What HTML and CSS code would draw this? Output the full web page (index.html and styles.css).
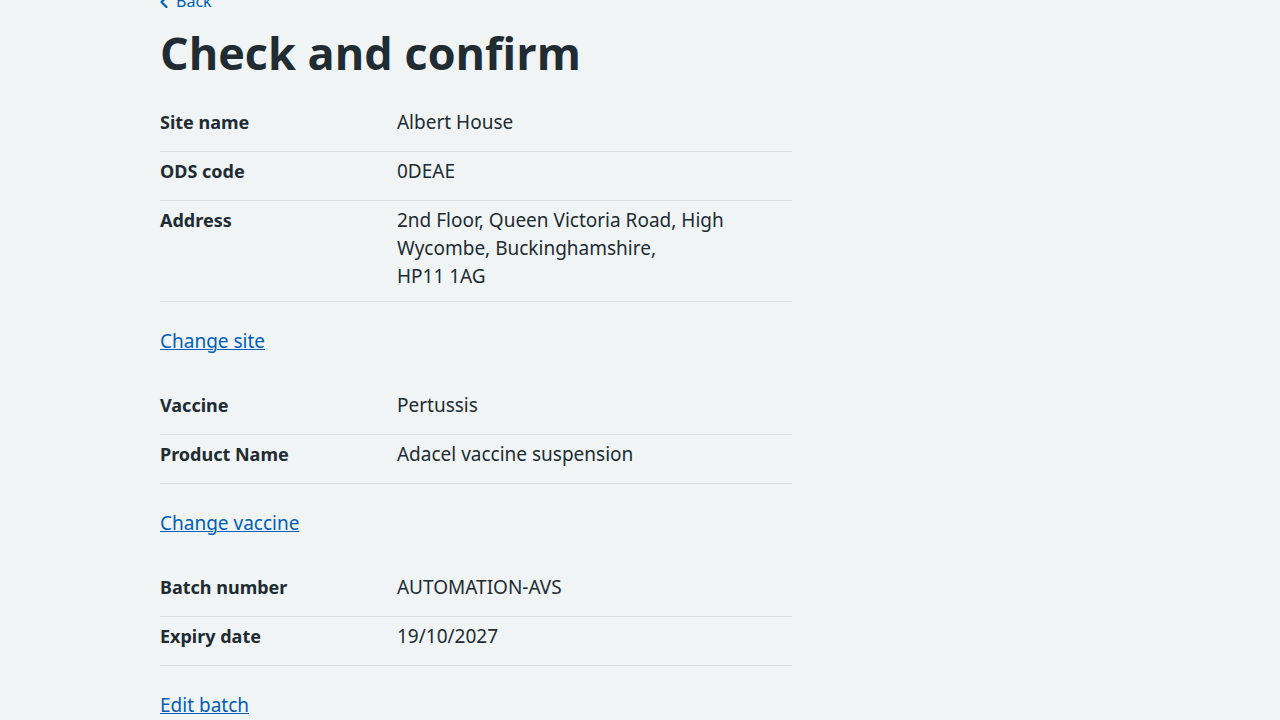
FILE: index.html
```html
<!DOCTYPE html>
<html lang="en">
<head>
<meta charset="utf-8">
<meta name="viewport" content="width=device-width, initial-scale=1">
<title>Check and confirm</title>
<link rel="stylesheet" href="styles.css">
</head>
<body>
<div class="container">
  <a class="back-link" href="#">
    <svg class="back-icon" viewBox="0 0 8 14" aria-hidden="true"><path d="M6.500 3 1.500 8l5 5" fill="none" stroke="currentColor" stroke-width="2.200" stroke-linecap="round" stroke-linejoin="round"/></svg>
    Back
  </a>
  <main class="content">
    <h1 class="heading">Check and confirm</h1>

    <dl class="summary">
      <div class="row"><dt class="key">Site name</dt><dd class="value">Albert House</dd></div>
      <div class="row"><dt class="key">ODS code</dt><dd class="value">0DEAE</dd></div>
      <div class="row row-address"><dt class="key">Address</dt><dd class="value">2nd Floor, Queen Victoria Road, High Wycombe, Buckinghamshire,<br>HP11 1AG</dd></div>
    </dl>
    <p class="action"><a class="link" href="#">Change site</a></p>

    <dl class="summary">
      <div class="row"><dt class="key">Vaccine</dt><dd class="value">Pertussis</dd></div>
      <div class="row"><dt class="key">Product Name</dt><dd class="value">Adacel vaccine suspension</dd></div>
    </dl>
    <p class="action"><a class="link" href="#">Change vaccine</a></p>

    <dl class="summary">
      <div class="row"><dt class="key">Batch number</dt><dd class="value">AUTOMATION-AVS</dd></div>
      <div class="row"><dt class="key">Expiry date</dt><dd class="value">19/10/2027</dd></div>
    </dl>
    <p class="action"><a class="link" href="#">Edit batch</a></p>
  </main>
</div>
</body>
</html>
```

FILE: styles.css
```css
html {
  overflow-x: hidden;
  scrollbar-width: none;
}

body {
  margin: 0;
  background: #f0f4f5;
  color: #212b32;
  font-family: "Noto Sans", "Open Sans", sans-serif;
  font-size: 19px;
  line-height: 28px;
}

.container {
  max-width: 960px;
  margin: -11px auto 0;
}

.back-link {
  display: flex;
  align-items: center;
  gap: 8px;
  width: fit-content;
  color: #005eb8;
  font-size: 16px;
  line-height: 24px;
  text-decoration: none;
}

.back-icon {
  width: 8px;
  height: 14px;
}

.content {
  width: 65.83%;
}

.heading {
  margin: 13px 0 28px;
  font-family: "Open Sans", "Noto Sans", sans-serif;
  font-size: 45px;
  font-weight: 700;
  line-height: 54px;
}

.summary {
  margin: 0;
}

.row {
  display: grid;
  grid-template-columns: 3fr 5fr;
  padding-bottom: 15px;
  margin-bottom: 5px;
  border-bottom: 1px solid #d8dde0;
}

.row-address {
  padding-bottom: 11px;
}

.key {
  font-size: 18px;
  font-weight: 700;
}

.value {
  margin: 0;
  padding-right: 20px;
}

.action {
  margin: 25px 0 36px;
}

.link {
  color: #005eb8;
  text-decoration: underline;
  text-underline-offset: 1px;
  text-decoration-thickness: 1px;
}
```
